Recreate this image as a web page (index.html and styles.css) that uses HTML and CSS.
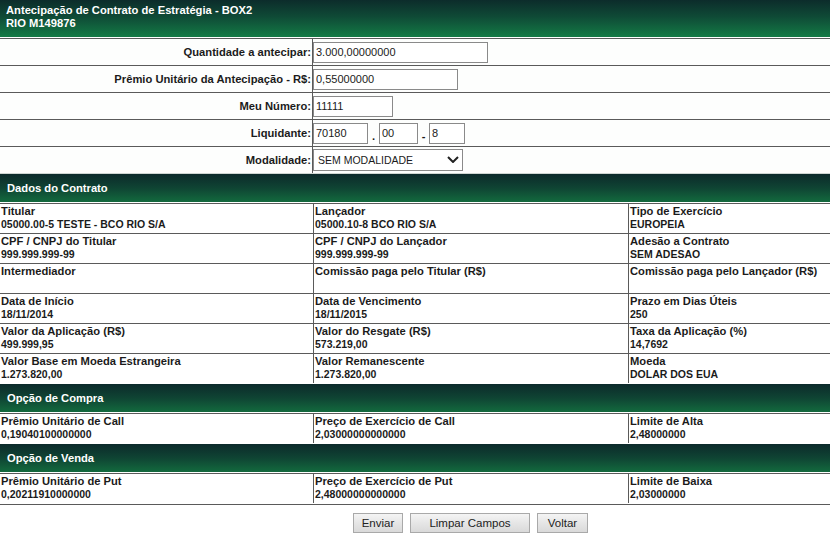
FILE: index.html
```html
<!DOCTYPE html>
<html lang="pt-BR">
<head>
<meta charset="utf-8">
<title>Antecipação de Contrato de Estratégia - BOX2</title>
<link rel="stylesheet" href="styles.css">
</head>
<body>
<div class="page">
  <div class="titlebar">
    <div>Antecipação de Contrato de Estratégia - BOX2</div>
    <div>RIO M149876</div>
  </div>

  <div class="form">
    <div class="frow">
      <div class="flabel">Quantidade a antecipar:</div>
      <div class="ffield"><input class="inp w-qtd" type="text" value="3.000,00000000"></div>
    </div>
    <div class="frow">
      <div class="flabel">Prêmio Unitário da Antecipação - R$:</div>
      <div class="ffield"><input class="inp w-premio" type="text" value="0,55000000"></div>
    </div>
    <div class="frow">
      <div class="flabel">Meu Número:</div>
      <div class="ffield"><input class="inp w-num" type="text" value="11111"></div>
    </div>
    <div class="frow">
      <div class="flabel">Liquidante:</div>
      <div class="ffield">
        <input class="inp w-liq1" type="text" value="70180">
        <span class="sep">.</span>
        <input class="inp w-liq2" type="text" value="00">
        <span class="sep">-</span>
        <input class="inp w-liq3" type="text" value="8">
      </div>
    </div>
    <div class="frow last">
      <div class="flabel">Modalidade:</div>
      <div class="ffield">
        <div class="selwrap">
          <select class="sel"><option>SEM MODALIDADE</option></select>
          <svg class="chev" width="12" height="7" viewBox="0 0 12 7"><path d="M1 1 L6 6 L11 1" fill="none" stroke="#222" stroke-width="2"/></svg>
        </div>
      </div>
    </div>
  </div>

  <div class="section">Dados do Contrato</div>
  <div class="grid">
    <div class="cell"><div>Titular</div><div class="val">05000.00-5 TESTE - BCO RIO S/A</div></div>
    <div class="cell"><div>Lançador</div><div class="val">05000.10-8 BCO RIO S/A</div></div>
    <div class="cell"><div>Tipo de Exercício</div><div class="val">EUROPEIA</div></div>

    <div class="cell"><div>CPF / CNPJ do Titular</div><div class="val">999.999.999-99</div></div>
    <div class="cell"><div>CPF / CNPJ do Lançador</div><div class="val">999.999.999-99</div></div>
    <div class="cell"><div>Adesão a Contrato</div><div class="val">SEM ADESAO</div></div>

    <div class="cell"><div>Intermediador</div><div class="val"></div></div>
    <div class="cell"><div>Comissão paga pelo Titular (R$)</div><div class="val"></div></div>
    <div class="cell"><div>Comissão paga pelo Lançador (R$)</div><div class="val"></div></div>

    <div class="cell"><div>Data de Início</div><div class="val">18/11/2014</div></div>
    <div class="cell"><div>Data de Vencimento</div><div class="val">18/11/2015</div></div>
    <div class="cell"><div>Prazo em Dias Úteis</div><div class="val">250</div></div>

    <div class="cell"><div>Valor da Aplicação (R$)</div><div class="val">499.999,95</div></div>
    <div class="cell"><div>Valor do Resgate (R$)</div><div class="val">573.219,00</div></div>
    <div class="cell"><div>Taxa da Aplicação (%)</div><div class="val">14,7692</div></div>

    <div class="cell"><div>Valor Base em Moeda Estrangeira</div><div class="val">1.273.820,00</div></div>
    <div class="cell"><div>Valor Remanescente</div><div class="val">1.273.820,00</div></div>
    <div class="cell"><div>Moeda</div><div class="val">DOLAR DOS EUA</div></div>
  </div>

  <div class="section">Opção de Compra</div>
  <div class="grid">
    <div class="cell"><div>Prêmio Unitário de Call</div><div class="val">0,19040100000000</div></div>
    <div class="cell"><div>Preço de Exercício de Call</div><div class="val">2,03000000000000</div></div>
    <div class="cell"><div>Limite de Alta</div><div class="val">2,48000000</div></div>
  </div>

  <div class="section">Opção de Venda</div>
  <div class="grid final">
    <div class="cell"><div>Prêmio Unitário de Put</div><div class="val">0,20211910000000</div></div>
    <div class="cell"><div>Preço de Exercício de Put</div><div class="val">2,48000000000000</div></div>
    <div class="cell"><div>Limite de Baixa</div><div class="val">2,03000000</div></div>
  </div>

  <div class="actions">
    <button class="btn b-enviar" type="button">Enviar</button>
    <button class="btn b-limpar" type="button">Limpar Campos</button>
    <button class="btn b-voltar" type="button">Voltar</button>
  </div>
</div>
</body>
</html>
```

FILE: styles.css
```css
html, body {
  margin: 0;
  padding: 0;
  background: #ffffff;
}

body {
  font-family: "Liberation Sans", Arial, sans-serif;
  font-size: 11.2px;
  color: #1b1b1b;
}

.page {
  width: 830px;
  overflow: hidden;
}

.titlebar {
  box-sizing: border-box;
  height: 37px;
  padding: 4px 6px 0;
  line-height: 13px;
  font-weight: bold;
  color: #ffffff;
  background: linear-gradient(to bottom, #0c2c2b 0%, #0f4a36 45%, #137a45 100%);
}

.form {
  margin-top: 1px;
  border-top: 1px solid #5a5a5a;
}

.frow {
  display: grid;
  grid-template-columns: 313px 1fr;
  height: 27px;
  box-sizing: border-box;
  border-bottom: 1px solid #5a5a5a;
  background: #fdfefd;
}

.frow.last {
  border-bottom-color: #cfd6d2;
}

.flabel {
  box-sizing: border-box;
  border-right: 1px solid #5a5a5a;
  padding-right: 1px;
  display: flex;
  align-items: center;
  justify-content: flex-end;
  font-weight: bold;
  color: #1b1b1b;
  white-space: nowrap;
}

.ffield {
  display: flex;
  align-items: center;
}

.inp {
  box-sizing: border-box;
  height: 21px;
  margin: 0;
  padding: 0 2px;
  border: 1px solid #8a8a8a;
  background: #ffffff;
  font-family: "Liberation Sans", Arial, sans-serif;
  font-size: 11px;
  color: #1b1b1b;
  outline: none;
}

.w-qtd { width: 175px; }
.w-premio { width: 145px; }
.w-num { width: 80px; }
.w-liq1 { width: 55px; }
.w-liq2 { width: 39px; }
.w-liq3 { width: 36px; }

.sep {
  width: 11px;
  text-align: center;
  font-weight: bold;
  padding-top: 6px;
}

.selwrap {
  position: relative;
  width: 150px;
  height: 22px;
}

.sel {
  appearance: none;
  -webkit-appearance: none;
  box-sizing: border-box;
  width: 150px;
  height: 22px;
  margin: 0;
  padding: 0 0 0 4px;
  border: 1px solid #8a8a8a;
  border-radius: 0;
  background: #ffffff;
  font-family: "Liberation Sans", Arial, sans-serif;
  font-size: 10.5px;
  color: #1b1b1b;
}

.chev {
  position: absolute;
  right: 4px;
  top: 7px;
  pointer-events: none;
}

.section {
  box-sizing: border-box;
  height: 28px;
  margin-bottom: 1px;
  padding-left: 7px;
  display: flex;
  align-items: center;
  font-weight: bold;
  color: #ffffff;
  background: linear-gradient(to bottom, #0c2a2b 0%, #0f4433 50%, #136a3e 100%);
}

.grid {
  display: grid;
  grid-template-columns: 313px 315px 1fr;
  margin-bottom: 1px;
}

.cell {
  box-sizing: border-box;
  height: 30px;
  padding: 1px 1px 0;
  border-top: 1px solid #5a5a5a;
  line-height: 13px;
  font-weight: bold;
  color: #1b1b1b;
  white-space: nowrap;
  overflow: hidden;
}

.cell:nth-child(3n+2),
.cell:nth-child(3n+3) {
  border-left: 1px solid #5a5a5a;
}

.val {
  font-size: 10.5px;
  min-height: 13px;
}

.grid.final {
  border-bottom: 1px solid #5a5a5a;
  padding-bottom: 1px;
  margin-bottom: 0;
}

.actions {
  display: flex;
  justify-content: center;
  gap: 7px;
  padding: 8px 0 0 111px;
}

.btn {
  box-sizing: border-box;
  height: 20px;
  margin: 0;
  padding: 0;
  border: 1px solid #a9a9a9;
  border-radius: 0;
  background: linear-gradient(to bottom, #f4f4f4 0%, #e6e6e6 50%, #d9d9d9 100%);
  font-family: "Liberation Sans", Arial, sans-serif;
  font-size: 11.5px;
  color: #222222;
}

.b-enviar { width: 50px; }
.b-limpar { width: 120px; }
.b-voltar { width: 51px; }
```
